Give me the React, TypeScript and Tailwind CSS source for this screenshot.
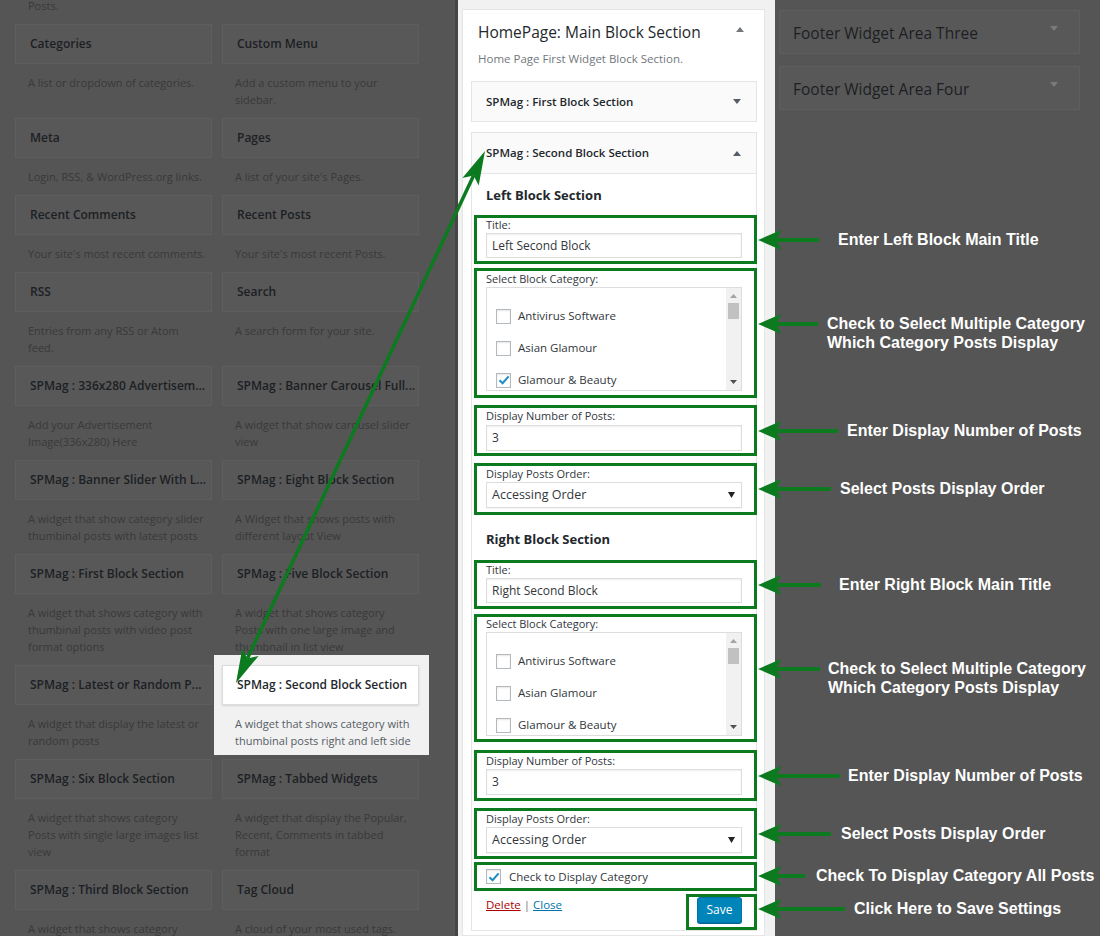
import React from 'react';

const GREEN = '#0c7b1f';

type Widget = { title: string; desc: string[]; active?: boolean };

const widgetRows: [Widget, Widget][] = [
  [
    { title: 'Categories', desc: ['A list or dropdown of categories.'] },
    { title: 'Custom Menu', desc: ['Add a custom menu to your', 'sidebar.'] },
  ],
  [
    { title: 'Meta', desc: ['Login, RSS, & WordPress.org links.'] },
    { title: 'Pages', desc: ["A list of your site's Pages."] },
  ],
  [
    { title: 'Recent Comments', desc: ["Your site's most recent comments."] },
    { title: 'Recent Posts', desc: ["Your site's most recent Posts."] },
  ],
  [
    { title: 'RSS', desc: ['Entries from any RSS or Atom', 'feed.'] },
    { title: 'Search', desc: ['A search form for your site.'] },
  ],
  [
    { title: 'SPMag : 336x280 Advertisem...', desc: ['Add your Advertisement', 'Image(336x280) Here'] },
    { title: 'SPMag : Banner Carousel Full...', desc: ['A widget that show carousel slider', 'view'] },
  ],
  [
    { title: 'SPMag : Banner Slider With L...', desc: ['A widget that show category slider', 'thumbinal posts with latest posts'] },
    { title: 'SPMag : Eight Block Section', desc: ['A Widget that shows posts with', 'different layout View'] },
  ],
  [
    { title: 'SPMag : First Block Section', desc: ['A widget that shows category with', 'thumbinal posts with video post', 'format options'] },
    { title: 'SPMag : Five Block Section', desc: ['A widget that shows category', 'Posts with one large image and', 'thumbnail in list view'] },
  ],
  [
    { title: 'SPMag : Latest or Random P...', desc: ['A widget that display the latest or', 'random posts'] },
    { title: 'SPMag : Second Block Section', desc: ['A widget that shows category with', 'thumbinal posts right and left side'], active: true },
  ],
  [
    { title: 'SPMag : Six Block Section', desc: ['A widget that shows category', 'Posts with single large images list', 'view'] },
    { title: 'SPMag : Tabbed Widgets', desc: ['A widget that display the Popular,', 'Recent, Comments in tabbed', 'format'] },
  ],
  [
    { title: 'SPMag : Third Block Section', desc: ['A widget that shows category'] },
    { title: 'Tag Cloud', desc: ['A cloud of your most used tags.'] },
  ],
];

const categories = ['Antivirus Software', 'Asian Glamour', 'Glamour & Beauty'];

function Tri({ up, color }: { up?: boolean; color: string }) {
  return (
    <svg width="8" height="5" viewBox="0 0 8 5" className="shrink-0">
      <path d={up ? 'M0 5 L4 0 L8 5 Z' : 'M0 0 L8 0 L4 5 Z'} fill={color} />
    </svg>
  );
}

function WidgetCell({ w }: { w: Widget }) {
  if (w.active) {
    return (
      <div className="relative">
        <div className="absolute -left-[8px] -right-[10px] -top-[10px] bottom-[4px] bg-[#f1f1f1]" />
        <div className="relative h-[40px] flex items-center pl-[14px] border border-[#dcdcdc] bg-white shadow-[0_1px_2px_rgba(0,0,0,0.12)] text-[12px] font-semibold text-[#23282d] whitespace-nowrap">
          {w.title}
        </div>
        <div className="relative pt-[10px] pb-[10px] pl-[13px] text-[11px] leading-[17px] text-[#555d66] whitespace-nowrap">
          {w.desc.map((l) => (
            <div key={l}>{l}</div>
          ))}
        </div>
      </div>
    );
  }
  return (
    <div>
      <div className="h-[40px] flex items-center pl-[14px] border border-[#5e5e5e] bg-[#585858] text-[12px] font-semibold text-[#1c1f24] whitespace-nowrap overflow-hidden">
        {w.title}
      </div>
      <div className="pt-[10px] pb-[10px] pl-[13px] text-[11px] leading-[17px] text-[#393939] whitespace-nowrap">
        {w.desc.map((l) => (
          <div key={l}>{l}</div>
        ))}
      </div>
    </div>
  );
}

function Checkbox({ checked, size }: { checked?: boolean; size: string }) {
  return (
    <div className={`${size} shrink-0 border border-[#b4b9be] bg-white shadow-[inset_0_1px_2px_rgba(0,0,0,0.1)] flex items-center justify-center`}>
      {checked && (
        <svg width="12" height="12" viewBox="0 0 12 12">
          <path d="M1.5 6.2 L4.6 9.2 L10.6 2.4" fill="none" stroke="#1e8cbe" strokeWidth="2" />
        </svg>
      )}
    </div>
  );
}

function TextInput({ value, h }: { value: string; h: string }) {
  return (
    <div className={`${h} border border-[#dddddd] bg-white shadow-[inset_0_1px_2px_rgba(0,0,0,0.07)] flex items-center pl-[5px] text-[12px] text-[#32373c]`}>
      {value}
    </div>
  );
}

function SelectBox() {
  return (
    <div className="h-[26px] border border-[#dddddd] bg-white shadow-[0_1px_1px_rgba(0,0,0,0.04)] flex items-center justify-between pl-[5px] pr-[6px] text-[12.5px] text-[#32373c]">
      Accessing Order
      <svg width="7" height="6" viewBox="0 0 7 6">
        <path d="M0 0 L7 0 L3.5 6 Z" fill="#222" />
      </svg>
    </div>
  );
}

function CategoryList({ checked }: { checked: boolean[] }) {
  return (
    <div className="flex h-[104px] border border-[#dddddd] bg-white overflow-hidden">
      <div className="flex-1 pt-[12px] pl-[9px]">
        {categories.map((c, i) => (
          <div key={c} className="h-[32px] flex items-center gap-[7px] text-[11.5px] text-[#32373c]">
            <Checkbox checked={checked[i]} size="w-[15px] h-[15px]" />
            {c}
          </div>
        ))}
      </div>
      <div className="w-[15px] bg-[#f1f1f1] flex flex-col items-center">
        <div className="mt-[6px]">
          <svg width="7" height="4" viewBox="0 0 7 4">
            <path d="M0 4 L3.5 0 L7 4 Z" fill="#a3a3a3" />
          </svg>
        </div>
        <div className="mt-[5px] w-[11px] h-[16px] bg-[#c1c1c1]" />
        <div className="mt-auto mb-[6px]">
          <svg width="7" height="4" viewBox="0 0 7 4">
            <path d="M0 0 L7 0 L3.5 4 Z" fill="#505050" />
          </svg>
        </div>
      </div>
    </div>
  );
}

function Callout({ pos, end, gap, lines }: { pos: string; end: number; gap: string; lines: string[] }) {
  const len = end - 757;
  return (
    <div className={`absolute left-[calc(100%+3px)] z-20 flex items-start pointer-events-none ${pos}`}>
      <svg width={len} height={20} viewBox={`0 0 ${len} 20`} className="shrink-0">
        <rect x={18} y={8} width={len - 18} height={4} fill={GREEN} />
        <path d="M1 10 L24 0 L19.5 10 L24 20 Z" fill={GREEN} />
      </svg>
      <div className={`${gap} font-['Liberation_Sans',Arial,sans-serif] font-bold text-[16px] leading-[19px] text-white whitespace-nowrap`}>
        {lines.map((l) => (
          <div key={l}>{l}</div>
        ))}
      </div>
    </div>
  );
}

function Hl({ className, children }: { className: string; children: React.ReactNode }) {
  return (
    <div className={`relative -mr-[1px] border-[3px] border-[#0c7b1f] pl-[9px] pr-[12px] ${className}`}>{children}</div>
  );
}

function Label({ text }: { text: string }) {
  return <div className="text-[11px] leading-[14px] text-[#32373c]">{text}</div>;
}

function BlockForm({ side }: { side: 'left' | 'right' }) {
  const left = side === 'left';
  return (
    <>
      <Hl className="h-[49px]">
        <Label text="Title:" />
        <div className="mt-[1px]">
          <TextInput value={left ? 'Left Second Block' : 'Right Second Block'} h="h-[25px]" />
        </div>
        <Callout
          pos="top-[calc(50%-10px)]"
          end={left ? 819 : 821}
          gap={left ? 'ml-[19px]' : 'ml-[18px]'}
          lines={[left ? 'Enter Left Block Main Title' : 'Enter Right Block Main Title']}
        />
      </Hl>
      <Hl className={left ? 'mt-[4px] h-[130px] pt-[1px]' : 'mt-[5px] h-[128px]'}>
        <Label text="Select Block Category:" />
        <div className="mt-[1px]">
          <CategoryList checked={left ? [false, false, true] : [false, false, false]} />
        </div>
        <Callout
          pos={left ? 'top-[43px]' : 'top-[42px]'}
          end={left ? 818 : 820}
          gap={left ? 'ml-[9px]' : 'ml-[8px]'}
          lines={['Check to Select Multiple Category', 'Which Category Posts Display']}
        />
      </Hl>
      <Hl className={left ? 'mt-[7px] h-[51px] pt-[1px]' : 'mt-[8px] h-[51px] pt-[1px]'}>
        <Label text="Display Number of Posts:" />
        <div className={left ? 'mt-[2px]' : 'mt-[1px]'}>
          <TextInput value="3" h="h-[26px]" />
        </div>
        <Callout
          pos="top-[calc(50%-10px)]"
          end={left ? 838 : 840}
          gap={left ? 'ml-[9px]' : 'ml-[8px]'}
          lines={['Enter Display Number of Posts']}
        />
      </Hl>
      <Hl className={left ? 'mt-[7px] h-[52px] pt-[1px]' : 'mt-[7px] h-[51px] pt-[1px]'}>
        <Label text="Display Posts Order:" />
        <div className="mt-[1px]">
          <SelectBox />
        </div>
        <Callout
          pos="top-[calc(50%-10px)]"
          end={831}
          gap={left ? 'ml-[9px]' : 'ml-[10px]'}
          lines={['Select Posts Display Order']}
        />
      </Hl>
    </>
  );
}

function DiagonalArrow() {
  return (
    <svg className="absolute inset-0 z-30 pointer-events-none" width="1100" height="936" viewBox="0 0 1100 936">
      <line x1="473.6" y1="175.4" x2="247.4" y2="658.5" stroke={GREEN} strokeWidth="3.5" />
      <path d="M485 151 L478.7 185.6 L473.6 175.4 L462.4 178 Z" fill={GREEN} />
      <path d="M236 683 L242.3 648.4 L247.4 658.5 L258.6 656 Z" fill={GREEN} />
    </svg>
  );
}

export default function App() {
  return (
    <div className="relative w-[1100px] h-[936px] overflow-hidden bg-[#555555] flex font-['Open_Sans',sans-serif]">
      {/* available widgets (dimmed) */}
      <div className="w-[455px] shrink-0 pl-[15px]">
        <div className="h-[24px] flex items-start pl-[13px] text-[11px] leading-[17px] text-[#393939]">
          <div className="-mt-[3px]">Posts.</div>
        </div>
        <div className="grid grid-cols-[197px_197px] gap-x-[10px]">
          {widgetRows.map(([a, b]) => (
            <React.Fragment key={a.title}>
              <WidgetCell w={a} />
              <WidgetCell w={b} />
            </React.Fragment>
          ))}
        </div>
      </div>

      {/* focused sidebar panel */}
      <div className="w-[320px] shrink-0 flex flex-col border-l-[3px] border-[#454545] bg-[#f1f1f1] pl-[4px] pr-[10px] pt-[9px]">
        <div className="flex-1 border border-[#e5e5e5] bg-white pl-[8px] pr-[7px]">
          <div className="flex justify-between pl-[7px] pr-[13px] pt-[12px]">
            <div className="text-[15.5px] leading-[20px] text-[#23282d]">HomePage: Main Block Section</div>
            <div className="pt-[5px]">
              <Tri up color="#72777c" />
            </div>
          </div>
          <div className="pl-[7px] mt-[9px] text-[11.5px] leading-[16px] text-[#72777c]">Home Page First Widget Block Section.</div>

          <div className="mt-[14px] h-[41px] border border-[#e5e5e5] bg-[#fafafa] flex items-center justify-between pl-[14px] pr-[15px]">
            <span className="text-[11.5px] font-semibold text-[#23282d]">SPMag : First Block Section</span>
            <Tri color="#555d66" />
          </div>

          <div className="mt-[10px] border border-[#e5e5e5]">
            <div className="h-[41px] border-b border-[#e5e5e5] bg-[#fafafa] flex items-center justify-between pl-[14px] pr-[15px]">
              <span className="text-[11.5px] font-semibold text-[#23282d]">SPMag : Second Block Section</span>
              <Tri up color="#555d66" />
            </div>
            <div className="pl-[2px]">
              <div className="pl-[12px] pt-[12px] pb-[11px] text-[13px] leading-[18px] font-bold text-[#23282d]">Left Block Section</div>
              <BlockForm side="left" />
              <div className="pl-[12px] pt-[15px] pb-[12px] text-[13px] leading-[18px] font-bold text-[#23282d]">Right Block Section</div>
              <BlockForm side="right" />

              <Hl className="mt-[3px] h-[29px] flex items-center gap-[8px]">
                <Checkbox checked size="w-[15px] h-[15px]" />
                <span className="text-[11.5px] text-[#32373c]">Check to Display Category</span>
                <Callout pos="top-[calc(50%-11px)]" end={805} gap="ml-[11px]" lines={['Check To Display Category All Posts']} />
              </Hl>

              <div className="mt-[3px] flex justify-between items-start">
                <div className="pl-[12px] pt-[3px] text-[11.5px] leading-[16px]">
                  <span className="text-[#a00] underline">Delete</span>
                  <span className="text-[#72777c]"> | </span>
                  <span className="text-[#0073aa] underline">Close</span>
                </div>
                <div className="relative -mr-[1px] w-[71px] h-[36px] border-[3px] border-[#0c7b1f] pl-[8px]">
                  <div className="w-[45px] h-[26px] rounded-[3px] bg-[#0085ba] border border-[#0073aa] shadow-[0_1px_0_#006799] flex items-center justify-center text-[12px] text-white">
                    Save
                  </div>
                  <Callout pos="top-[2px]" end={845} gap="ml-[9px]" lines={['Click Here to Save Settings']} />
                </div>
              </div>
            </div>
          </div>
        </div>
      </div>

      {/* other sidebars (dimmed) */}
      <div className="flex-1 pl-[4px] pr-[20px] pt-[10px]">
        <div className="h-[44px] border border-[#5e5e5e] bg-[#585858] flex items-center justify-between pl-[13px] pr-[21px]">
          <span className="text-[15.5px] leading-[20px] pt-[2px] text-[#1c1f24]">Footer Widget Area Three</span>
          <div className="-mt-[7px]">
            <Tri color="#7a7a7a" />
          </div>
        </div>
        <div className="mt-[12px] h-[44px] border border-[#5e5e5e] bg-[#585858] flex items-center justify-between pl-[13px] pr-[21px]">
          <span className="text-[15.5px] leading-[20px] pt-[2px] text-[#1c1f24]">Footer Widget Area Four</span>
          <div className="-mt-[7px]">
            <Tri color="#7a7a7a" />
          </div>
        </div>
      </div>

      <DiagonalArrow />
    </div>
  );
}
